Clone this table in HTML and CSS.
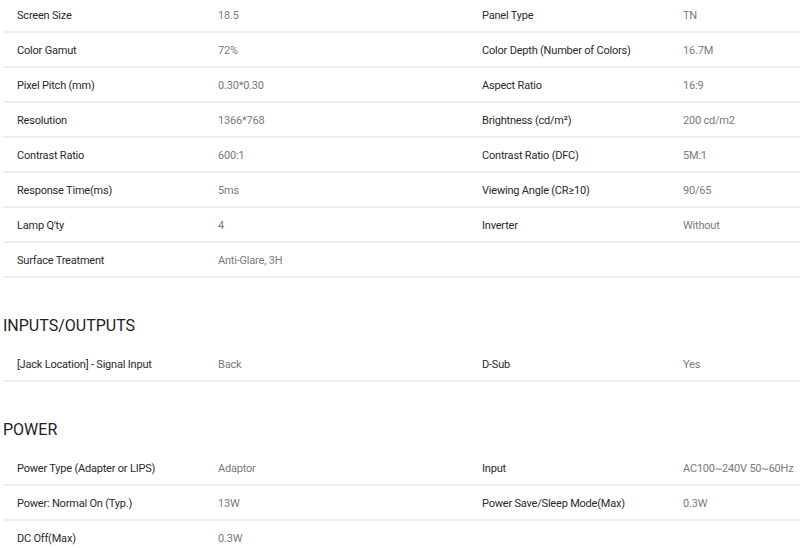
FILE: index.html
```html
<!DOCTYPE html>
<html lang="en">

<head>
    <meta charset="UTF-8">
    <meta name="viewport" content="width=device-width, initial-scale=1.0">
    <title>Specifications</title>
    <link rel="stylesheet" href="styles.css">
</head>

<body>
    <div class="specs">
        <div class="spec-group">
            <div class="spec-row">
                <span class="name">Screen Size</span><span class="value">18.5</span>
                <span class="name">Panel Type</span><span class="value">TN</span>
            </div>
            <div class="spec-row">
                <span class="name">Color Gamut</span><span class="value">72%</span>
                <span class="name">Color Depth (Number of Colors)</span><span class="value">16.7M</span>
            </div>
            <div class="spec-row">
                <span class="name">Pixel Pitch (mm)</span><span class="value">0.30*0.30</span>
                <span class="name">Aspect Ratio</span><span class="value">16:9</span>
            </div>
            <div class="spec-row">
                <span class="name">Resolution</span><span class="value">1366*768</span>
                <span class="name">Brightness (cd/m²)</span><span class="value">200 cd/m2</span>
            </div>
            <div class="spec-row">
                <span class="name">Contrast Ratio</span><span class="value">600:1</span>
                <span class="name">Contrast Ratio (DFC)</span><span class="value">5M:1</span>
            </div>
            <div class="spec-row">
                <span class="name">Response Time(ms)</span><span class="value">5ms</span>
                <span class="name">Viewing Angle (CR≥10)</span><span class="value">90/65</span>
            </div>
            <div class="spec-row">
                <span class="name">Lamp Q'ty</span><span class="value">4</span>
                <span class="name">Inverter</span><span class="value">Without</span>
            </div>
            <div class="spec-row">
                <span class="name">Surface Treatment</span><span class="value">Anti-Glare, 3H</span>
            </div>
        </div>

        <div class="spec-group">
            <h3>INPUTS/OUTPUTS</h3>
            <div class="spec-row">
                <span class="name">[Jack Location] - Signal Input</span><span class="value">Back</span>
                <span class="name">D-Sub</span><span class="value">Yes</span>
            </div>
        </div>

        <div class="spec-group">
            <h3>POWER</h3>
            <div class="spec-row">
                <span class="name">Power Type (Adapter or LIPS)</span><span class="value">Adaptor</span>
                <span class="name">Input</span><span class="value">AC100~240V 50~60Hz</span>
            </div>
            <div class="spec-row">
                <span class="name">Power: Normal On (Typ.)</span><span class="value">13W</span>
                <span class="name">Power Save/Sleep Mode(Max)</span><span class="value">0.3W</span>
            </div>
            <div class="spec-row">
                <span class="name">DC Off(Max)</span><span class="value">0.3W</span>
            </div>
        </div>
    </div>
</body>

</html>
```

FILE: styles.css
```css
* {
    margin: 0;
    padding: 0;
    box-sizing: border-box;
}

body {
    background: #fff;
    font-family: Roboto, "Liberation Sans", sans-serif;
    color: #333;
    overflow: hidden;
}

.specs {
    margin-top: -2px;
    padding-left: 3px;
}

.spec-group h3 {
    margin-top: 36px;
    margin-bottom: 9px;
    font-size: 16px;
    line-height: 24px;
    font-weight: 400;
    color: #222;
}

.spec-row {
    display: grid;
    grid-template-columns: 201px 264px 201px 1fr;
    align-items: center;
    height: 35px;
    border-bottom: 2px solid #eeeeee;
    font-size: 11px;
    letter-spacing: -0.2px;
    white-space: nowrap;
}

.spec-row span {
    padding-left: 14px;
    padding-top: 2px;
}

.name {
    color: #2a2a2a;
}

.value {
    color: #7a7a7a;
}
```
